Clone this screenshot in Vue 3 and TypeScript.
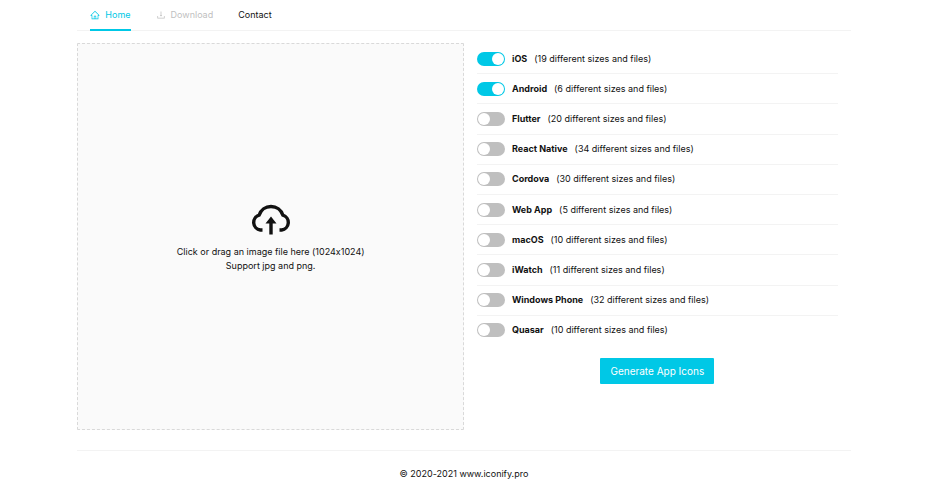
<script setup lang="ts">
import { ref } from 'vue'

interface Platform {
  name: string
  count: number
  enabled: boolean
}

const platforms = ref<Platform[]>([
  { name: 'iOS', count: 19, enabled: true },
  { name: 'Android', count: 6, enabled: true },
  { name: 'Flutter', count: 20, enabled: false },
  { name: 'React Native', count: 34, enabled: false },
  { name: 'Cordova', count: 30, enabled: false },
  { name: 'Web App', count: 5, enabled: false },
  { name: 'macOS', count: 10, enabled: false },
  { name: 'iWatch', count: 11, enabled: false },
  { name: 'Windows Phone', count: 32, enabled: false },
  { name: 'Quasar', count: 10, enabled: false },
])
</script>

<template>
  <div class="page">
    <nav class="menu">
      <a class="item active" href="#home">
        <svg class="icon" viewBox="0 0 1024 1024" fill="currentColor" aria-hidden="true">
          <path d="M946.5 505L560.1 118.8l-25.9-25.9a31.5 31.5 0 0 0-44.400 0L77.500 505a63.900 63.900 0 0 0-18.800 46c.4 35.200 29.700 63.300 64.900 63.300h42.500V940h691.800V614.300h43.400c17.100 0 33.200-6.700 45.300-18.800a63.600 63.600 0 0 0 18.700-45.300c0-17-6.700-33.100-18.800-45.200zM568 868H456V664h112v204zm217.900-325.700V868H632V640c0-22.100-17.900-40-40-40H432c-22.100 0-40 17.900-40 40v228H238.100V542.300h-96l370-369.700 23.100 23.100L882 542.300h-96.100z" />
        </svg>
        <span>Home</span>
      </a>
      <a class="item disabled" href="#download" aria-disabled="true">
        <svg class="icon" viewBox="0 0 1024 1024" fill="currentColor" aria-hidden="true">
          <path d="M505.700 661a8 8 0 0 0 12.600 0l112-141.700c4.100-5.200.4-12.900-6.300-12.900h-74.100V168c0-4.400-3.600-8-8-8h-60c-4.400 0-8 3.600-8 8v338.300H400c-6.700 0-10.400 7.700-6.300 12.900l112 141.800zM878 626h-60c-4.400 0-8 3.600-8 8v154H214V634c0-4.400-3.600-8-8-8h-60c-4.400 0-8 3.600-8 8v198c0 17.700 14.300 32 32 32h684c17.700 0 32-14.300 32-32V634c0-4.400-3.600-8-8-8z" />
        </svg>
        <span>Download</span>
      </a>
      <a class="item" href="#contact">Contact</a>
    </nav>

    <main class="content">
      <button class="dropzone" type="button">
        <svg class="cloud" viewBox="0 0 40 32" fill="none" aria-hidden="true">
          <path d="M11.500 27H9.300A7.600 7.600 0 0 1 8.100 12.200A12.500 12.500 0 0 1 31.900 12.200A7.600 7.600 0 0 1 30.700 27H28.500" stroke="currentColor" stroke-width="3.400" stroke-linejoin="round" />
          <path d="M20 13.500L25.500 20.500H21.700V31.500H18.300V20.500H14.500Z" fill="currentColor" />
        </svg>
        <span>Click or drag an image file here (1024x1024)</span>
        <span>Support jpg and png.</span>
      </button>

      <section class="options">
        <ul class="platforms">
          <li v-for="p in platforms" :key="p.name" class="row">
            <label class="choice">
              <input v-model="p.enabled" class="switch" type="checkbox" role="switch" />
              <strong>{{ p.name }}</strong>
              <span>({{ p.count }} different sizes and files)</span>
            </label>
          </li>
        </ul>
        <button class="generate" type="button">Generate App Icons</button>
      </section>
    </main>

    <footer class="footer">© 2020-2021 www.iconify.pro</footer>
  </div>
</template>

<style>
body {
  background: #fff;
}
</style>

<style scoped>
.page {
  width: calc(100% * 10 / 12);
  margin: 0 auto;
  color: #111;
  font-family: Inter, "Liberation Sans", sans-serif;
  font-size: 9px;
  font-variant-ligatures: no-contextual;
  line-height: 14px;
}

.menu {
  display: flex;
  gap: 25px;
  padding: 0 13px;
  border-bottom: 1px solid #f3f3f3;
}

.item {
  display: flex;
  align-items: center;
  gap: 5px;
  height: 30px;
  margin-bottom: -1px;
  border-bottom: 1px solid transparent;
  color: #111;
  text-decoration: none;
}

.active {
  border-bottom: 2px solid #00c8e6;
  height: 29px;
  color: #00c8e6;
}

.disabled {
  color: #bfbfbf;
}

.icon {
  width: 10px;
  height: 10px;
}

.content {
  display: grid;
  grid-template-columns: 1fr 1fr;
  margin-top: 12px;
}

.dropzone {
  display: flex;
  flex-direction: column;
  align-items: center;
  justify-content: center;
  box-sizing: border-box;
  width: 100%;
  aspect-ratio: 1;
  padding: 3px 0 0;
  border: 1px dashed #d9d9d9;
  border-radius: 1px;
  background: #fafafa;
  color: #111;
  font: inherit;
  font-variant-ligatures: no-contextual;
  cursor: pointer;
}

.cloud {
  width: 40px;
  height: 32px;
  margin-bottom: 10px;
}

.options {
  display: flex;
  flex-direction: column;
  align-items: center;
  padding: 1px 13px 0;
}

.platforms {
  display: grid;
  grid-auto-rows: 1fr;
  width: 100%;
  min-height: 302px;
  margin: 0;
  padding: 0;
  list-style: none;
}

.row {
  display: flex;
  align-items: center;
  border-bottom: 1px solid #f3f3f3;
}

.row:last-child {
  border-bottom-color: transparent;
}

.choice {
  display: flex;
  align-items: center;
  gap: 7px;
}

.switch {
  appearance: none;
  display: flex;
  align-items: center;
  box-sizing: border-box;
  width: 28px;
  height: 14px;
  margin: 0;
  padding: 1px;
  border-radius: 7px;
  background: #bfbfbf;
  cursor: pointer;
}

.switch::before {
  content: "";
  width: 12px;
  height: 12px;
  border-radius: 50%;
  background: #fff;
}

.switch:checked {
  justify-content: flex-end;
  background: #00c8e6;
}

.generate {
  height: 26px;
  margin-top: 12px;
  padding: 0 10px;
  border: 0;
  border-radius: 1px;
  background: #00c8e6;
  color: #fff;
  font: inherit;
  font-size: 10px;
  cursor: pointer;
}

.footer {
  margin-top: 20px;
  padding: 16px 0;
  border-top: 1px solid #f3f3f3;
  text-align: center;
}
</style>
